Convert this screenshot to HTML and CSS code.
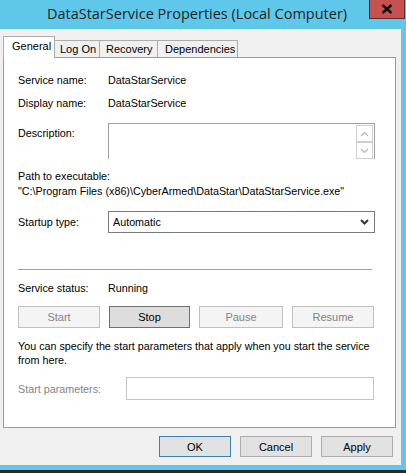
FILE: index.html
```html
<!DOCTYPE html>
<html lang="en">
<head>
    <meta charset="UTF-8">
    <title>DataStarService Properties (Local Computer)</title>
    <link rel="stylesheet" href="styles.css">
</head>
<body>

<div class="window">
    <div class="titlebar">
        <div class="title">DataStarService Properties (Local Computer)</div>
        <div class="close">
            <svg width="12" height="10" viewBox="0 0 12 10">
                <path d="M1.5 1 L10.5 9 M10.5 1 L1.5 9" stroke="#111" stroke-width="2.4" fill="none"/>
            </svg>
        </div>
    </div>

    <div class="client">
        <div class="tabs">
            <div class="tab tab-general selected">General</div>
            <div class="tab tab-logon">Log On</div>
            <div class="tab tab-recovery">Recovery</div>
            <div class="tab tab-deps">Dependencies</div>
        </div>

        <div class="panel">
            <div class="row row-name">
                <span class="label">Service name:</span>
                <span class="value">DataStarService</span>
            </div>
            <div class="row row-display">
                <span class="label">Display name:</span>
                <span class="value">DataStarService</span>
            </div>
            <div class="row row-desc">
                <span class="label desc-label">Description:</span>
                <div class="textarea">
                    <div class="scroll">
                        <div class="scroll-btn">
                            <svg width="9" height="6" viewBox="0 0 9 6"><path d="M1 5 L4.5 1.5 L8 5" stroke="#b5b5b5" stroke-width="1.2" fill="none"/></svg>
                        </div>
                        <div class="scroll-btn">
                            <svg width="9" height="6" viewBox="0 0 9 6"><path d="M1 1 L4.5 4.5 L8 1" stroke="#b5b5b5" stroke-width="1.2" fill="none"/></svg>
                        </div>
                    </div>
                </div>
            </div>
            <div class="path">
                <div>Path to executable:</div>
                <div>"C:\Program Files (x86)\CyberArmed\DataStar\DataStarService.exe"</div>
            </div>
            <div class="row row-startup">
                <span class="label">Startup type:</span>
                <div class="select">
                    <span>Automatic</span>
                    <svg width="9" height="6" viewBox="0 0 9 6"><path d="M1 1 L4.5 4.5 L8 1" stroke="#333" stroke-width="2" fill="none"/></svg>
                </div>
            </div>

            <div class="separator"></div>

            <div class="row row-status">
                <span class="label">Service status:</span>
                <span class="value">Running</span>
            </div>
            <div class="service-buttons">
                <button class="btn disabled btn-start">Start</button>
                <button class="btn btn-stop">Stop</button>
                <button class="btn disabled btn-pause">Pause</button>
                <button class="btn disabled btn-resume">Resume</button>
            </div>
            <p class="hint">You can specify the start parameters that apply when you start the service from here.</p>
            <div class="row row-params">
                <span class="label label-disabled">Start parameters:</span>
                <div class="input"></div>
            </div>
        </div>

        <div class="dialog-buttons">
            <button class="btn btn-default">OK</button>
            <button class="btn">Cancel</button>
            <button class="btn">Apply</button>
        </div>
    </div>
</div>

</body>
</html>
```

FILE: styles.css
```css
body {
    margin: 0;
    padding: 0;
    font-family: "Liberation Sans", Arial, sans-serif;
    font-size: 10.75px;
    color: #000;
}
.window {
    width: 406px;
    height: 473px;
    box-sizing: border-box;
    background-color: #5fc8ea;
    border-bottom: 3px solid #2b2b2b;
    display: flex;
    flex-direction: column;
}
.titlebar {
    height: 29px;
    display: flex;
    position: relative;
}
.title {
    flex-grow: 1;
    text-align: center;
    font-family: "Open Sans", "Noto Sans", sans-serif;
    font-size: 14.5px;
    line-height: 28px;
    color: #1f1f1f;
    padding-right: 12px;
}
.close {
    position: absolute;
    top: 0;
    right: 1px;
    width: 36px;
    height: 19px;
    box-sizing: border-box;
    background-color: #c75050;
    border: 1px solid #5c2a2a;
    border-top: none;
    display: flex;
    align-items: center;
    justify-content: center;
}
.client {
    height: 436px;
    margin-right: 5px;
    background-color: #f0f0f0;
    padding: 7px 0 0 3px;
    box-sizing: border-box;
}

/* tabs */
.tabs {
    display: flex;
    align-items: flex-end;
    height: 21px;
    position: relative;
    z-index: 1;
}
.tab {
    box-sizing: border-box;
    height: 17px;
    border: 1px solid #acacac;
    border-bottom: none;
    background-color: #f0f0f0;
    line-height: 16px;
    padding-left: 6px;
    margin-left: -1px;
    font-size: 11px;
}
.tab.selected {
    height: 22px;
    margin-bottom: -1px;
    background-color: #fff;
    padding-left: 8px;
    line-height: 19px;
    margin-left: 0;
    z-index: 2;
}
.tab-general { width: 52px; }
.tab-logon { width: 46px; padding-left: 5px; }
.tab-recovery { width: 59px; }
.tab-deps { width: 81px; padding-left: 7px; }

.panel {
    width: 393px;
    height: 371px;
    box-sizing: border-box;
    background-color: #fff;
    border: 1px solid #9a9a9a;
    padding: 14px 0 0 14px;
}
.row {
    display: flex;
    align-items: center;
    height: 16px;
}
.label {
    width: 90px;
    flex-shrink: 0;
}
.label-disabled {
    color: #838383;
    width: 108px;
}
.row-display { margin-top: 7px; }
.row-desc {
    margin-top: 12px;
    height: 36px;
    align-items: flex-start;
}
.desc-label { padding-top: 4px; }
.textarea {
    width: 267px;
    height: 36px;
    box-sizing: border-box;
    border: 1px solid #a0a0a0;
    border-bottom: none;
    display: flex;
    justify-content: flex-end;
    padding: 1px 1px 0 0;
}
.scroll {
    display: flex;
    flex-direction: column;
}
.scroll-btn {
    width: 17px;
    height: 17px;
    box-sizing: border-box;
    border: 1px solid #cfcfcf;
    display: flex;
    align-items: center;
    justify-content: center;
}
.path {
    margin-top: 10px;
    line-height: 15px;
}
.row-startup {
    margin-top: 12px;
    height: 22px;
}
.select {
    width: 267px;
    height: 22px;
    box-sizing: border-box;
    border: 1px solid #7a7a7a;
    display: flex;
    align-items: center;
    justify-content: space-between;
    padding: 0 5px 0 4px;
}
.separator {
    margin-top: 36px;
    width: 354px;
    height: 1px;
    background-color: #a0a0a0;
}
.row-status { margin-top: 10px; }

/* buttons */
.btn {
    font-family: "Liberation Sans", Arial, sans-serif;
    font-size: 11px;
    color: #000;
    height: 22px;
    box-sizing: border-box;
    background-color: #e1e1e1;
    border: 1px solid #adadad;
    padding: 0;
    margin: 0;
}
.btn.disabled {
    background-color: #f4f4f4;
    border-color: #bfbfbf;
    color: #838383;
}
.service-buttons {
    display: flex;
    gap: 9px;
    margin-top: 10px;
}
.btn-start { width: 82px; }
.btn-stop { width: 81px; border-color: #707070; background-color: #dddddd; }
.btn-pause { width: 84px; }
.btn-resume { width: 82px; }
.hint {
    margin: 11px 0 0 0;
    line-height: 14px;
    width: 360px;
}
.row-params {
    margin-top: 10px;
    height: 23px;
}
.input {
    width: 248px;
    height: 23px;
    box-sizing: border-box;
    border: 1px solid #c4c4c4;
}
.dialog-buttons {
    display: flex;
    justify-content: flex-end;
    gap: 9px;
    margin-top: 8px;
    padding-right: 8px;
}
.dialog-buttons .btn {
    width: 72px;
    height: 21px;
    border-color: #adadad;
}
.dialog-buttons .btn-default {
    border-color: #3c7fb1;
}
```
